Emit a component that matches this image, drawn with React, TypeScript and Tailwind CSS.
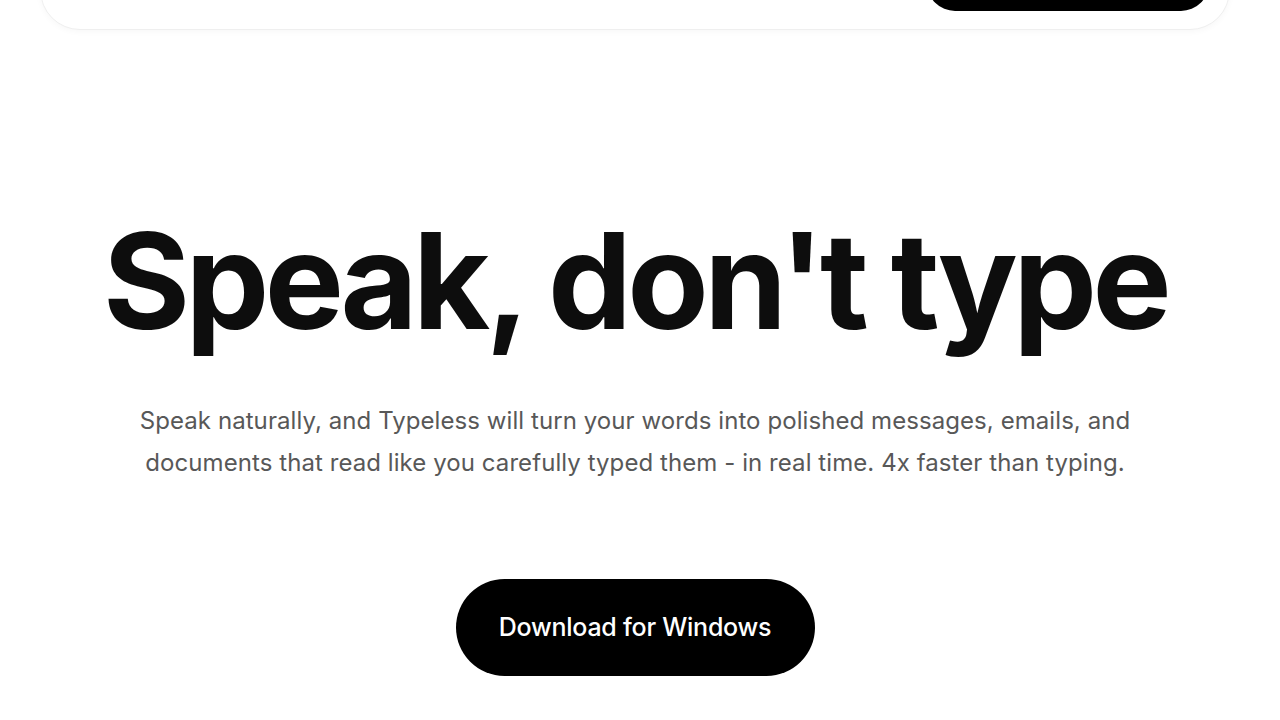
export default function App() {
  return (
    <div className="min-h-[720px] bg-white font-['Inter','Noto_Sans',sans-serif] overflow-hidden">
      <div className="w-[1270px]">
        {/* Top nav (scrolled partially out of view) */}
        <header className="px-10 -mt-[50px]">
          <div className="h-[80px] rounded-[40px] bg-white border border-[#efefef] shadow-[0_2px_6px_rgba(0,0,0,0.03)] flex items-end justify-end pr-[20px] pb-[18px]">
            <button aria-label="Get Started" className="h-[56px] w-[282px] rounded-full bg-black" />
          </div>
        </header>

        <main className="flex flex-col items-center text-center pt-[184px]">
          <h1 className="text-[133px] leading-none font-bold tracking-[-0.035em] text-[#0d0d0d]">
            Speak, don't type
          </h1>
          <p className="mt-[53px] text-[24px] leading-[42px] text-[#585858] max-w-[1010px] tracking-[0.003em]">
            Speak naturally, and Typeless will turn your words into polished messages, emails, and documents that read like
            you carefully typed them - in real time. 4x faster than typing.
          </p>
          <button className="mt-[95px] h-[97px] w-[359px] rounded-full bg-black text-white text-[25px] font-medium tracking-[-0.01em]">
            Download for Windows
          </button>
        </main>
      </div>
    </div>
  )
}
